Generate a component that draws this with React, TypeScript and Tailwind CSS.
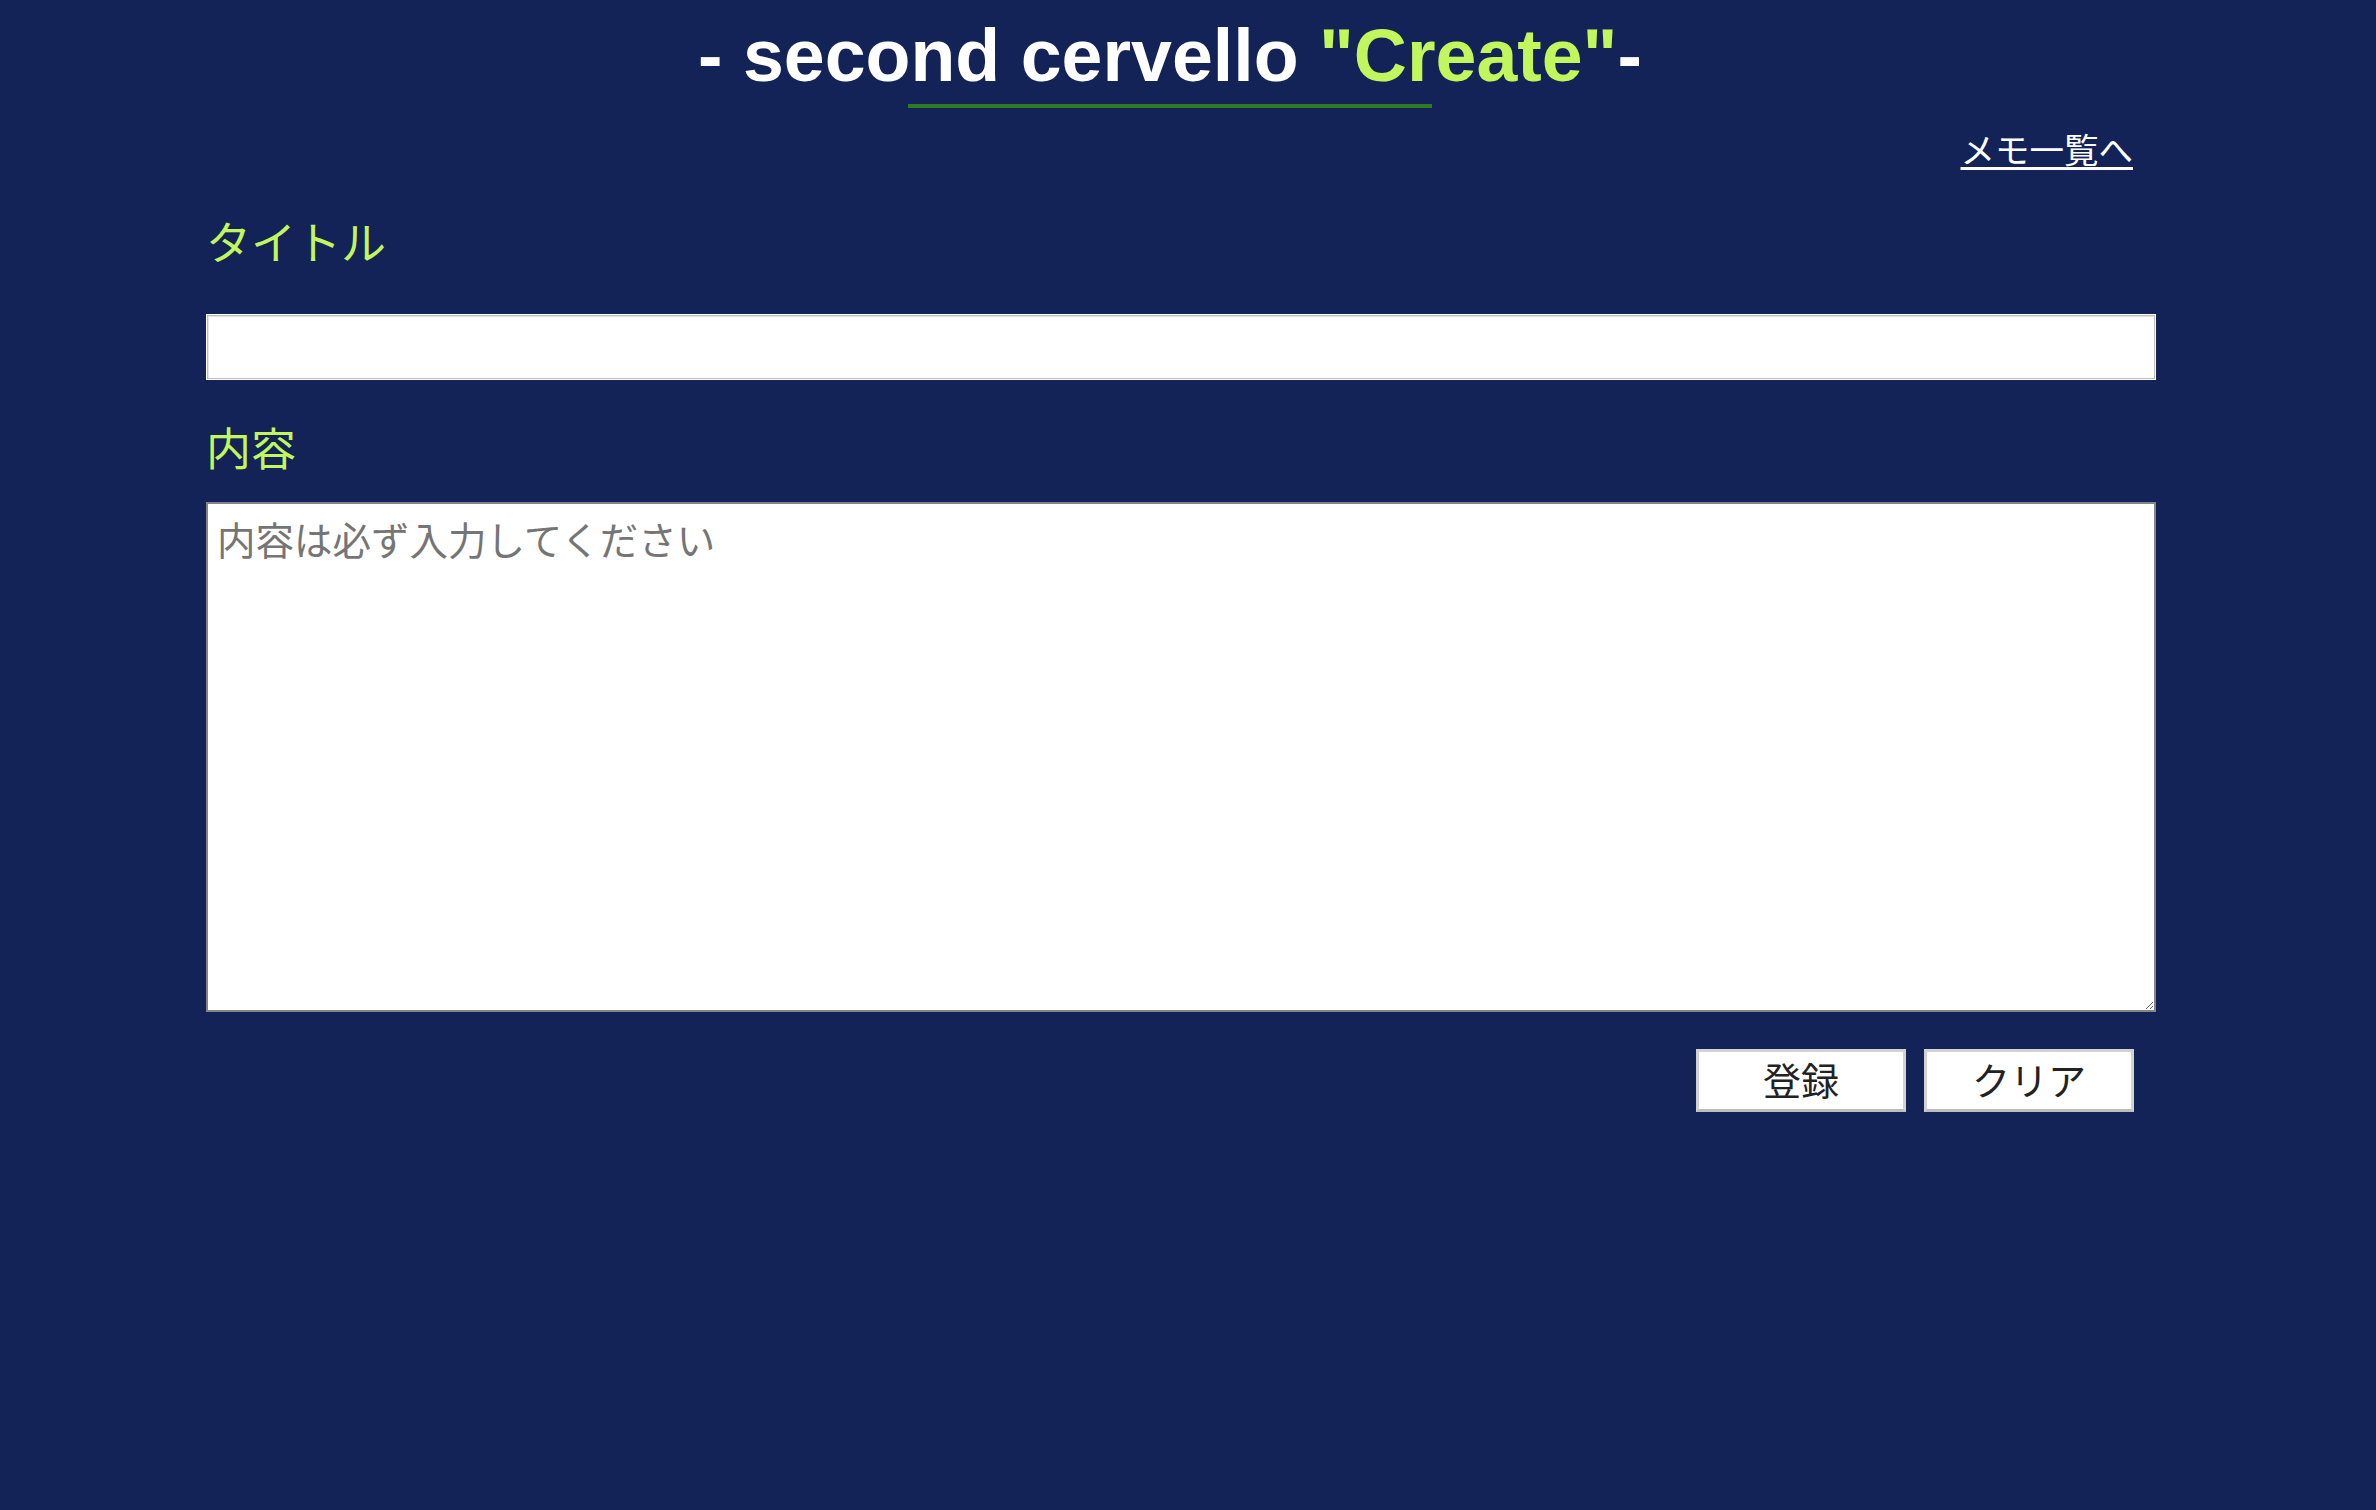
import React, { useState } from 'react';

const App = () => {
  const [title, setTitle] = useState('');
  const [content, setContent] = useState('');

  const clear = () => {
    setTitle('');
    setContent('');
  };

  return (
    <div
      className="min-h-screen w-full bg-[#132358]"
      style={{ fontFamily: '"Liberation Sans", "Noto Sans CJK JP", sans-serif' }}
    >
      {/* Header */}
      <header className="pr-[36px] text-center">
        <h1 className="pt-[19px] text-[73.5px] font-bold leading-[74px] text-white">
          - second cervello <span className="text-[#c1f65c]">"Create"</span>-
        </h1>
        <div className="mx-auto mt-[11px] h-[4px] w-[524px] bg-[#2f7b22]"></div>
      </header>

      <main className="ml-[206px] w-[1950px]">
        {/* Back link */}
        <div className="mt-[26px] flex justify-end pr-[23px]">
          <a
            href="#"
            className="text-[34.5px] leading-[34px] text-white underline underline-offset-[4px]"
          >
            メモ一覧へ
          </a>
        </div>

        {/* Title field */}
        <label className="mt-[55px] block text-[45px] leading-[44px] text-[#c1f65c]">タイトル</label>
        <input
          type="text"
          value={title}
          onChange={e => setTitle(e.target.value)}
          className="m-[1px] mt-[48px] block h-[64px] w-[1948px] border border-[#bcbcbc] bg-white px-3 text-[32px] text-[#222] shadow-[0_0_0_1px_#ffffff,inset_1px_1px_0_#e4e4e4] outline-none"
        />

        {/* Content field */}
        <label className="mt-[50px] block text-[45px] leading-[44px] text-[#c1f65c]">内容</label>
        <textarea
          value={content}
          onChange={e => setContent(e.target.value)}
          placeholder="内容は必ず入力してください"
          className="mt-[29px] block h-[510px] w-[1950px] border-2 border-[#858585] bg-white px-[9px] pt-[15px] text-[38.5px] leading-[1.2] text-[#222] outline-none placeholder:text-[#757575]"
        />

        {/* Actions */}
        <div className="mt-[37px] flex justify-end gap-[18px] pr-[22px]">
          <button className="h-[63px] w-[210px] border-[3px] border-[#d2d2d2] border-b-[#bdbdbd] bg-white pt-[3px] text-[38px] leading-none text-[#222]">
            登録
          </button>
          <button
            onClick={clear}
            className="h-[63px] w-[210px] border-[3px] border-[#d2d2d2] border-b-[#bdbdbd] bg-white pt-[3px] text-[38px] leading-none text-[#222]"
          >
            クリア
          </button>
        </div>
      </main>
    </div>
  );
};

export default App;
